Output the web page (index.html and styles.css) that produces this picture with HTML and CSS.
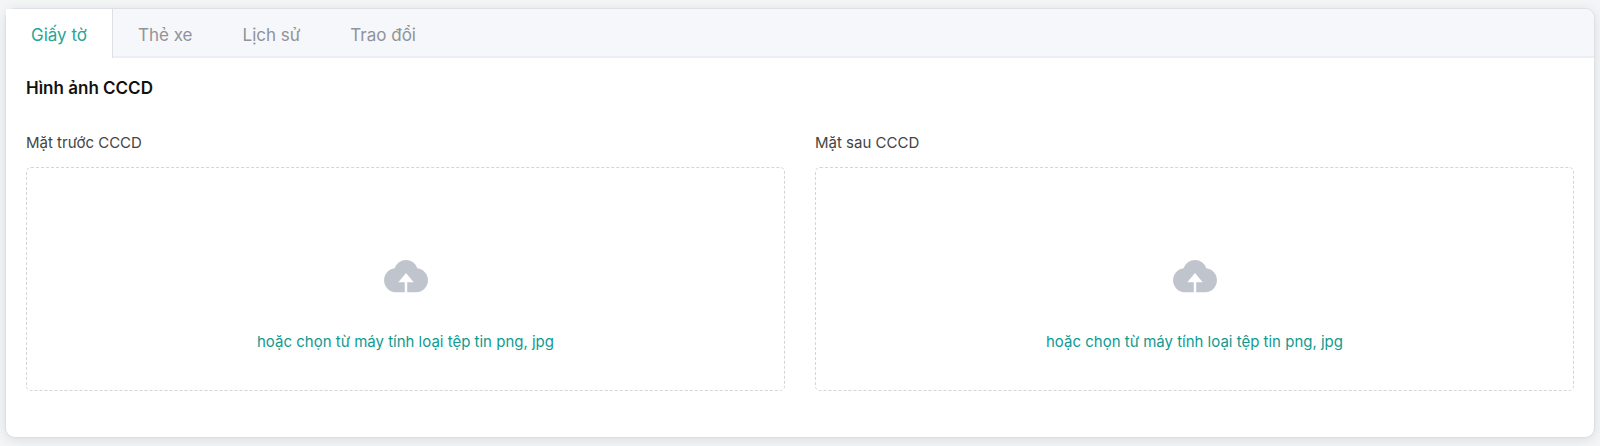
FILE: index.html
```
<!DOCTYPE html>
<html lang="vi">
<head>
    <meta charset="UTF-8">
    <meta name="viewport" content="width=device-width, initial-scale=1.0">
    <title>Giấy tờ</title>
    <link rel="stylesheet" href="styles.css">
</head>
<body>
    <main class="card">
        <div class="tabs" role="tablist">
            <button type="button" class="tab active" role="tab" aria-selected="true">Giấy tờ</button>
            <button type="button" class="tab" role="tab" aria-selected="false">Thẻ xe</button>
            <button type="button" class="tab" role="tab" aria-selected="false">Lịch sử</button>
            <button type="button" class="tab" role="tab" aria-selected="false">Trao đổi</button>
        </div>
        <div class="content">
            <h2>Hình ảnh CCCD</h2>
            <div class="uploads">
                <div class="upload">
                    <label class="upload-title" for="front-input">Mặt trước CCCD</label>
                    <label class="dropzone" for="front-input">
                        <svg class="cloud" viewBox="0 0 44 34" aria-hidden="true">
                            <path d="M11 10A11.500 11.500 0 0 1 33 10A11.700 11.700 0 0 1 32.300 33.300H23.200V23.500H29.500L22 14.500L14.500 23.500H20.800V33.300H11.700A11.700 11.700 0 0 1 11 10Z"/>
                        </svg>
                        <span>hoặc chọn từ máy tính loại tệp tin png, jpg</span>
                    </label>
                    <input type="file" id="front-input" accept="image/png, image/jpeg">
                </div>
                <div class="upload">
                    <label class="upload-title" for="back-input">Mặt sau CCCD</label>
                    <label class="dropzone" for="back-input">
                        <svg class="cloud" viewBox="0 0 44 34" aria-hidden="true">
                            <path d="M11 10A11.500 11.500 0 0 1 33 10A11.700 11.700 0 0 1 32.300 33.300H23.200V23.500H29.500L22 14.500L14.500 23.500H20.800V33.300H11.700A11.700 11.700 0 0 1 11 10Z"/>
                        </svg>
                        <span>hoặc chọn từ máy tính loại tệp tin png, jpg</span>
                    </label>
                    <input type="file" id="back-input" accept="image/png, image/jpeg">
                </div>
            </div>
        </div>
    </main>
</body>
</html>
```
FILE: styles.css
```
* {
    box-sizing: border-box;
}
body {
    font-family: 'Inter', 'Liberation Sans', sans-serif;
    margin: 0;
    padding: 8px 5px;
    background-color: #f4f5f6;
}
.card {
    background: #fff;
    border: 1px solid #dcdfe6;
    border-radius: 10px;
    box-shadow: 0 2px 12px rgba(0, 0, 0, 0.1);
}
.tabs {
    display: flex;
    background-color: #f5f7fa;
    border-bottom: 2px solid #ebeef5;
    border-radius: 10px 10px 0 0;
}
.tab {
    height: 49px;
    margin-bottom: -2px;
    padding: 2px 25px 0;
    border: none;
    background: none;
    color: #909399;
    font-family: inherit;
    font-size: 17px;
    cursor: pointer;
}
.tab.active {
    background-color: #fff;
    border-right: 1px solid #dcdfe6;
    color: #26a69a;
}
.content {
    padding: 18px 20px 46px;
}
h2 {
    margin: 0 0 31px;
    color: #111;
    font-size: 17px;
    font-weight: 600;
    line-height: 24px;
}
.uploads {
    display: grid;
    grid-template-columns: 1fr 1fr;
    gap: 30px;
}
.upload-title {
    display: block;
    margin-bottom: 12px;
    color: #444;
    font-size: 15px;
    line-height: 24px;
}
.upload input {
    display: none;
}
.dropzone {
    display: flex;
    flex-direction: column;
    align-items: center;
    gap: 38px;
    padding: 90px 20px 37px;
    border: 1px dashed #d5d5d5;
    border-radius: 5px;
    color: #0f9a92;
    font-size: 15px;
    line-height: 22px;
    cursor: pointer;
}
.dropzone:hover {
    border-color: #26a69a;
}
.cloud {
    width: 46px;
    height: 35px;
    fill: #c0c4cc;
}
```
